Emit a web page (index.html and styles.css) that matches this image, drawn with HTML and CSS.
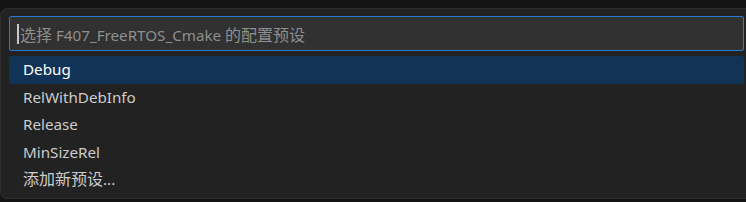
FILE: index.html
```html
<!DOCTYPE html>
<html lang="zh-CN">
<head>
<meta charset="utf-8">
<title>Quick Pick</title>
<link rel="stylesheet" href="styles.css">
</head>
<body>
<div class="panel">
  <div class="input">
    <span class="caret"></span>
    <span class="placeholder"><span class="cjk">选择</span> F407_FreeRTOS_Cmake <span class="cjk">的配置预设</span></span>
  </div>
  <ul class="list">
    <li class="item selected">Debug</li>
    <li class="item">RelWithDebInfo</li>
    <li class="item">Release</li>
    <li class="item">MinSizeRel</li>
    <li class="item"><span class="cjk">添加新预设</span>...</li>
  </ul>
</div>
</body>
</html>
```
FILE: styles.css
```css
html, body {
  margin: 0;
  padding: 0;
  background: #141414;
  width: 746px;
  height: 202px;
  overflow: hidden;
}
body {
  font-family: "Noto Sans", "Noto Sans CJK SC", sans-serif;
  font-size: 15.2px;
  color: #cccccc;
}
.cjk {
  font-size: 16px;
}
.panel {
  margin-top: 8px;
  width: 760px;
  height: 191px;
  box-sizing: border-box;
  background: #222222;
  border: 1px solid #2e2e2e;
  border-right: none;
  border-radius: 8px 0 0 7px;
  padding: 7px 0 0 8px;
}
.input {
  width: 735px;
  height: 35px;
  box-sizing: border-box;
  background: #313131;
  border: 1px solid #2b79d0;
  border-radius: 2px;
  display: flex;
  align-items: center;
  padding-left: 7px;
}
.caret {
  width: 2px;
  height: 20px;
  background: #c8c8c8;
  margin-right: 1px;
}
.placeholder {
  color: #8f8f8f;
  white-space: nowrap;
}
.list {
  list-style: none;
  margin: 5px 0 0;
  padding: 0;
  width: 735px;
}
.item {
  height: 27.5px;
  line-height: 27.5px;
  padding-left: 14px;
  border-radius: 3px;
  white-space: nowrap;
}
.item.selected {
  background: #113456;
  color: #ffffff;
}
```
